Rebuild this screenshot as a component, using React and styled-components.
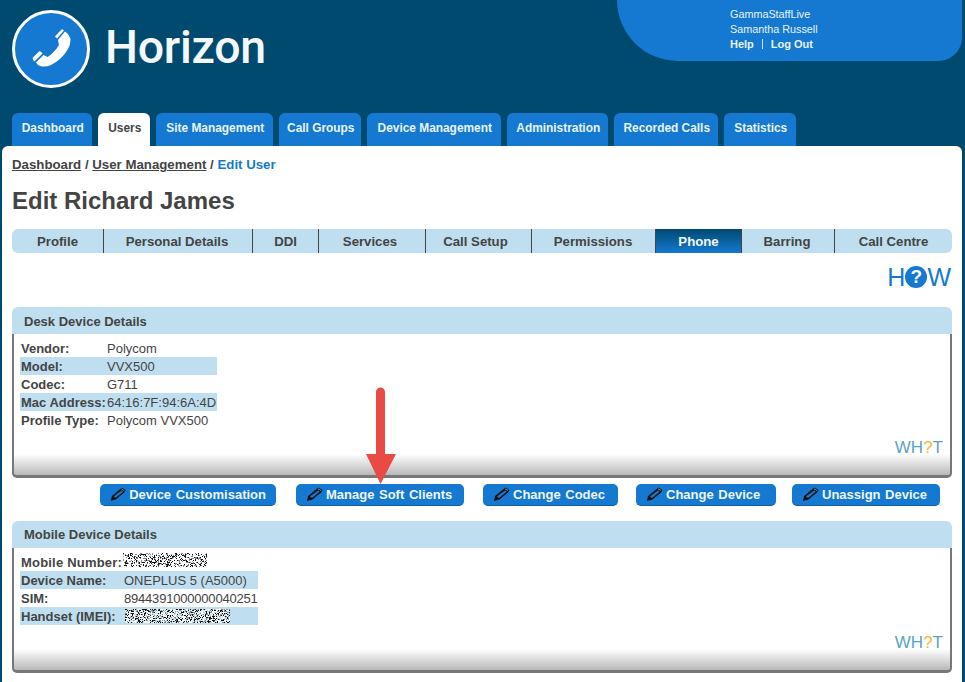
import React from 'react'
import styled, { createGlobalStyle } from 'styled-components'

const navItems = [
  { label: 'Dashboard', width: 80 },
  { label: 'Users', width: 52 },
  { label: 'Site Management', width: 117 },
  { label: 'Call Groups', width: 82 },
  { label: 'Device Management', width: 134 },
  { label: 'Administration', width: 101 },
  { label: 'Recorded Calls', width: 104 },
  { label: 'Statistics', width: 72 },
]

const subTabs = [
  { label: 'Profile', width: 92, nudge: 0 },
  { label: 'Personal Details', width: 149, nudge: 2 },
  { label: 'DDI', width: 66, nudge: 0 },
  { label: 'Services', width: 107, nudge: 4 },
  { label: 'Call Setup', width: 106, nudge: 6 },
  { label: 'Permissions', width: 124, nudge: 1 },
  { label: 'Phone', width: 86, nudge: 0 },
  { label: 'Barring', width: 93, nudge: 2 },
  { label: 'Call Centre', width: 117, nudge: 0 },
]

const deskRows = [
  ['Vendor:', 'Polycom'],
  ['Model:', 'VVX500'],
  ['Codec:', 'G711'],
  ['Mac Address:', '64:16:7F:94:6A:4D'],
  ['Profile Type:', 'Polycom VVX500'],
]

const actions = [
  { label: 'Device Customisation', width: 176, gap: 0 },
  { label: 'Manage Soft Clients', width: 168, gap: 20 },
  { label: 'Change Codec', width: 135, gap: 19 },
  { label: 'Change Device', width: 140, gap: 18 },
  { label: 'Unassign Device', width: 148, gap: 16 },
]

const Noise = ({ width, height, seed, $x, $y }) => {
  let s = seed
  const next = () => {
    s = (s * 16807) % 2147483647
    return s / 2147483647
  }
  const dots = []
  for (let y = 0; y < height; y++) {
    for (let x = 0; x < width; x++) {
      const v = next()
      if (v < 0.36) dots.push(<rect key={x + '-' + y} x={x} y={y} width="1" height="1" fill={v < 0.2 ? '#111' : '#888'} />)
      else if (v < 0.72) dots.push(<rect key={x + '-' + y} x={x} y={y} width="1" height="1" fill="#fff" />)
    }
  }
  return <NoiseSvg width={width} height={height} $x={$x} $y={$y} shapeRendering="crispEdges">{dots}</NoiseSvg>
}

const Logo = () => (
  <svg width="80" height="80" viewBox="11 9 80 80">
    <circle cx="51" cy="49" r="37.5" fill="#1579d1" stroke="#fff" strokeWidth="3" />
    <path fill="#fff" d="M65 31.5 Q70 35 70.5 40 Q70.5 49 60 59 Q50 67.5 42 66.5 Q38 66 36 62.5 L43.5 55 L47.5 57 Q54 53 59 45 L58 40 Z" />
    <path fill="#fff" d="M55 36.5 L61.5 29.5 Q62.5 29 63.5 30 L64 30.5 L57 38.5 Z" />
    <path fill="#fff" d="M32.5 58 L39 51.5 Q40 51 41 52 L42.5 53.5 L35 61 Q34.5 61.5 33.5 60.5 Z" />
  </svg>
)

const Pencil = () => (
  <svg width="17" height="15" viewBox="0 0 17 15">
    <path fill="#111" d="M12.5 0.5 L16.5 3 L15 5.5 L6.5 12.5 L1 14 L2 9 Z" />
    <path fill="#1579d1" d="M12 3.4 L13.8 4.6 L6 11 L3.9 9.6 Z" />
    <path stroke="#c9c9c9" strokeWidth="0.7" d="M12 1.8 L15.2 3.6" />
  </svg>
)

const Panel = ({ title, children, labelWidth, bodyHeight, titleLine }) => (
  <PanelBox>
    <PanelTitle $line={titleLine}>{title}</PanelTitle>
    <PanelBody $height={bodyHeight}>
      <Rows $labelWidth={labelWidth}>{children}</Rows>
      <What>WH<em>?</em>T</What>
    </PanelBody>
  </PanelBox>
)

const App = () => (
  <>
    <GlobalStyle />
    <Page>
      <Header>
        <Brand>
          <Logo />
          <BrandName>Horizon</BrandName>
        </Brand>
        <Account>
          <AccountName>GammaStaffLive</AccountName>
          <AccountName>Samantha Russell</AccountName>
          <AccountLinks><span>Help</span><Pipe />
            <span>Log Out</span></AccountLinks>
        </Account>
      </Header>
      <Nav>
        {navItems.map(item => <NavTab key={item.label} $width={item.width} $active={item.label === 'Users'}>{item.label}</NavTab>)}
      </Nav>
      <Main>
        <Breadcrumb>
          <u>Dashboard</u> / <u>User Management</u> / <b>Edit User</b>
        </Breadcrumb>
        <Title>Edit Richard James</Title>
        <SubTabs>
          {subTabs.map(tab => <SubTab key={tab.label} $width={tab.width} $nudge={tab.nudge} $active={tab.label === 'Phone'}>{tab.label}</SubTab>)}
        </SubTabs>
        <HowRow>H<HowMark>?</HowMark>W</HowRow>
        <Panel title="Desk Device Details" labelWidth={86} bodyHeight={144} titleLine={29}>
          {deskRows.map(([label, value], i) => (
            <Row key={label} $shade={i % 2 === 1} $width={197}>
              <Label>{label}</Label><span>{value}</span>
            </Row>
          ))}
        </Panel>
        <Actions>
          {actions.map(action => <ActionButton key={action.label} $width={action.width} $gap={action.gap}><Pencil />{action.label}</ActionButton>)}
        </Actions>
        <Panel title="Mobile Device Details" labelWidth={103} bodyHeight={125} titleLine={28}>
          <Row $width={238}><Label $wide>Mobile Number:</Label><Noise width={84} height={14} seed={4711} $x={-1} $y={-4} /></Row>
          <Row $shade $width={238}><Label>Device Name:</Label><span>ONEPLUS 5 (A5000)</span></Row>
          <Row $width={238}><Label>SIM:</Label><Digits>8944391000000040251</Digits></Row>
          <Row $shade $width={238}><Label>Handset (IMEI):</Label><Noise width={105} height={14} seed={913} $x={1} $y={0} /></Row>
        </Panel>
        <Arrow width="32" height="98" viewBox="0 0 32 98">
          <path fill="#e94b44" d="M11 5 a4.5 4.5 0 0 1 9 0 V67 H31 L15.5 97 L1 67 H11 Z" />
        </Arrow>
      </Main>
    </Page>
  </>
)

export default App

const GlobalStyle = createGlobalStyle`
  html, body {
    margin: 0;
    padding: 0;
    background: #004a70;
  }
  * {
    box-sizing: border-box;
  }
`
const Page = styled.div`
  width: 965px;
  height: 682px;
  overflow: hidden;
  background: #004a70;
  font-family: "Liberation Sans", Arial, sans-serif;
  color: #444;
`
const Header = styled.header`
  display: flex;
  justify-content: space-between;
  align-items: flex-start;
  height: 113px;
  padding: 0 3px 0 11px;
`
const Brand = styled.div`
  display: flex;
  align-items: center;
  gap: 14px;
  padding-top: 9px;
`
const BrandName = styled.div`
  margin-top: -5px;
  font-family: Roboto, sans-serif;
  font-size: 46.5px;
  font-weight: 500;
  letter-spacing: -0.3px;
  color: #f4f8fb;
  line-height: 80px;
`
const Account = styled.div`
  width: 345px;
  height: 61px;
  padding: 7px 0 0 113px;
  background: #1579d1;
  border-radius: 0 0 24px 62px;
  color: #e8f3fb;
  font-size: 11px;
  line-height: 15px;
`
const AccountName = styled.div`
  font-size: 10.8px;
`
const AccountLinks = styled.div`
  display: flex;
  align-items: center;
  font-weight: bold;
  line-height: 14px;
`
const Pipe = styled.i`
  width: 1px;
  height: 10px;
  margin: 0 8px;
  background: #cfe4f5;
`
const Nav = styled.nav`
  display: flex;
  gap: 6px;
  height: 33px;
  padding-left: 12px;
`
const NavTab = styled.div`
  width: ${p => p.$width}px;
  padding: 8px 0 0 1.5px;
  border-radius: 6px 6px 0 0;
  background: ${p => (p.$active ? '#fff' : '#1579d1')};
  color: ${p => (p.$active ? '#444' : '#e8f3fb')};
  font-size: 11.9px;
  font-weight: bold;
  line-height: 14px;
  text-align: center;
  white-space: nowrap;
`
const Main = styled.main`
  position: relative;
  height: 536px;
  margin: 0 3px 0 2px;
  padding: 0 10px;
  background: #fff;
  border-radius: 6px 6px 0 0;
`
const Breadcrumb = styled.div`
  padding-top: 11px;
  font-size: 13.25px;
  font-weight: bold;
  line-height: 16px;
  color: #444;

  b {
    color: #1579d1;
  }
`
const Title = styled.h1`
  margin: 14px 0 0;
  font-size: 24px;
  line-height: 28px;
  color: #444;
`
const SubTabs = styled.div`
  display: flex;
  height: 24px;
  margin-top: 14px;
  background: #bfdff0;
  border-radius: 6px;
  overflow: hidden;
`
const SubTab = styled.div`
  width: ${p => p.$width}px;
  padding-right: ${p => p.$nudge}px;
  border-right: 1px solid #444;
  background: ${p => (p.$active ? 'linear-gradient(#004a70, #1579d1)' : 'transparent')};
  color: ${p => (p.$active ? '#f2f8fc' : '#444')};
  font-size: 13.2px;
  font-weight: bold;
  line-height: 25px;
  text-align: center;

  &:last-child {
    border-right: 0;
  }
`
const HowRow = styled.div`
  display: flex;
  justify-content: flex-end;
  align-items: center;
  height: 24px;
  margin-top: 12px;
  padding-right: 1px;
  color: #1579d1;
  font-size: 25px;
`
const HowMark = styled.span`
  width: 22px;
  height: 22px;
  border-radius: 50%;
  background: #1579d1;
  color: #fff;
  font-size: 19px;
  font-weight: bold;
  line-height: 22px;
  text-align: center;
`
const PanelBox = styled.section`
  margin-top: 18px;
`
const PanelTitle = styled.h2`
  margin: 0;
  height: 27px;
  padding-left: 12px;
  background: #bfdff0;
  border-radius: 6px 6px 0 0;
  color: #444;
  font-size: 13px;
  line-height: ${p => p.$line}px;
`
const PanelBody = styled.div`
  position: relative;
  height: ${p => p.$height}px;
  padding: 5px 6px;
  border: solid #777;
  border-width: 0 2px 3px;
  border-radius: 0 0 5px 5px;
  background: linear-gradient(to top, #b9b9b9, #fff 21px);
`
const Rows = styled.div`
  --label-width: ${p => p.$labelWidth}px;
`
const Row = styled.div`
  display: flex;
  align-items: center;
  width: ${p => p.$width}px;
  height: 18px;
  background: ${p => (p.$shade ? '#bfdff0' : 'transparent')};
  padding-left: 1px;
  font-size: 13px;
  white-space: nowrap;
`
const Label = styled.span`
  flex: 0 0 var(--label-width);
  font-weight: bold;
  letter-spacing: ${p => (p.$wide ? '0.2px' : '0')};
`
const Digits = styled.span`
  letter-spacing: -0.2px;
`
const NoiseSvg = styled.svg`
  display: block;
  flex: none;
  margin-left: ${p => p.$x}px;
  margin-top: ${p => p.$y}px;
`
const What = styled.div`
  position: absolute;
  right: 7px;
  bottom: 17px;
  color: #5ba3c9;
  font-size: 17px;
  line-height: 20px;

  em {
    color: #f5b730;
    font-style: normal;
  }
`
const Actions = styled.div`
  display: flex;
  margin: 6px 0 -3px 88px;
`
const ActionButton = styled.button`
  display: flex;
  align-items: center;
  gap: 3px;
  width: ${p => p.$width}px;
  height: 22px;
  margin-left: ${p => p.$gap}px;
  padding: 0 10px;
  border: 0;
  border-bottom: 1px solid #0e5ea6;
  border-radius: 5px;
  background: #1579d1;
  color: #eef6fc;
  font-family: inherit;
  font-size: 13px;
  font-weight: bold;
  word-spacing: 1px;
  white-space: nowrap;
`
const Arrow = styled.svg`
  position: absolute;
  left: 363px;
  top: 241px;
`
